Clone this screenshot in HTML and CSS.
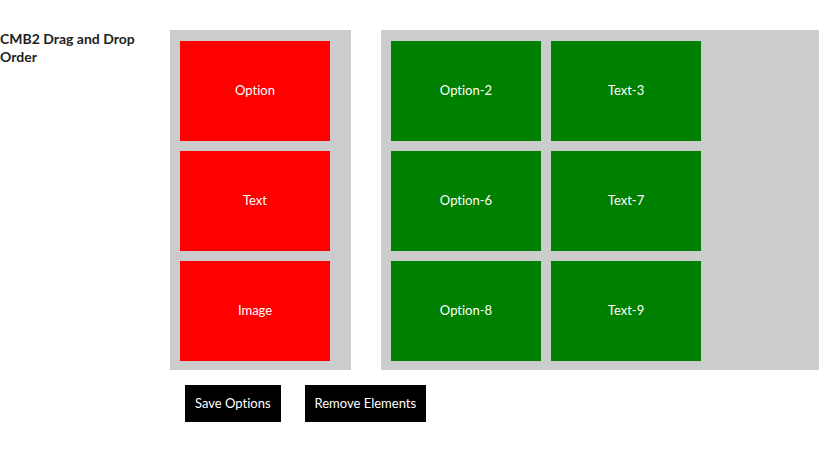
FILE: index.html
```html
<!DOCTYPE html>
<html lang="en">
<head>
<meta charset="utf-8">
<title>CMB2 Drag and Drop Order</title>
<link rel="stylesheet" href="styles.css">
</head>
<body>
<main class="field">
  <h1 class="field-label">CMB2 Drag and Drop Order</h1>
  <div class="field-body">
    <div class="panels">
      <ul class="panel panel-source">
        <li class="tile">Option</li>
        <li class="tile">Text</li>
        <li class="tile">Image</li>
      </ul>
      <ul class="panel panel-target">
        <li class="tile">Option-2</li>
        <li class="tile">Text-3</li>
        <li class="tile">Option-6</li>
        <li class="tile">Text-7</li>
        <li class="tile">Option-8</li>
        <li class="tile">Text-9</li>
      </ul>
    </div>
    <div class="actions">
      <button class="action" type="button">Save Options</button>
      <button class="action" type="button">Remove Elements</button>
    </div>
  </div>
</main>
</body>
</html>
```

FILE: styles.css
```css
body {
  margin: 0;
  background: #fff;
  color: #222;
  font: 13px/18px Lato, "Open Sans", sans-serif;
  font-variant-ligatures: none;
}

.field {
  display: flex;
  padding: 30px 5px 0 0;
}

.field-label {
  flex: none;
  box-sizing: border-box;
  width: 170px;
  margin: 0;
  padding-right: 30px;
  font-size: 14px;
  line-height: 18px;
  font-weight: 700;
}

.field-body {
  flex: 1;
}

.panels {
  display: flex;
  gap: 30px;
}

.panel {
  display: grid;
  align-content: start;
  gap: 10px;
  box-sizing: border-box;
  margin: 0;
  padding: 11px 10px 9px;
  background: #ccc;
  list-style: none;
}

.panel-source {
  flex: none;
  grid-template-columns: 150px;
  width: 181px;
}

.panel-target {
  flex: 1;
  grid-template-columns: repeat(2, 150px);
}

.tile {
  display: flex;
  align-items: center;
  justify-content: center;
  box-sizing: border-box;
  height: 100px;
  padding-bottom: 2px;
  color: #fff;
}

.panel-source .tile {
  background: #f00;
}

.panel-target .tile {
  background: #008000;
}

.actions {
  display: flex;
  gap: 24px;
  padding: 15px;
}

.action {
  padding: 10px;
  border: 0;
  background: #000;
  color: #fff;
  font: inherit;
  font-variant-ligatures: none;
  line-height: 17px;
  cursor: pointer;
}
```
